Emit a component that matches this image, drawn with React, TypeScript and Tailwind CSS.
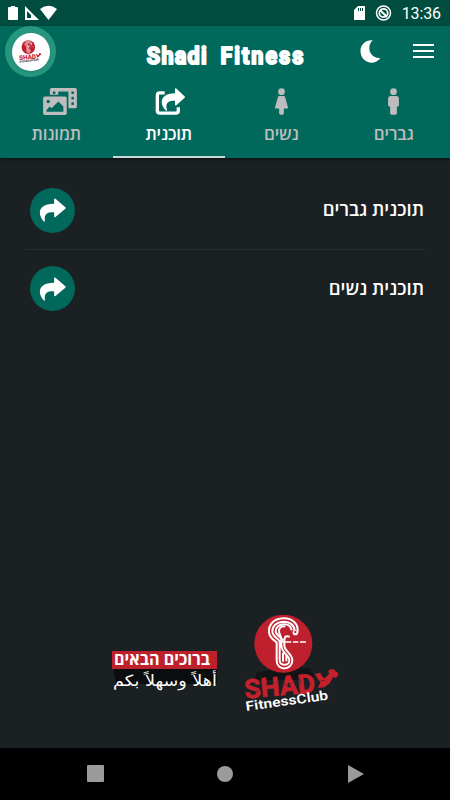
import React, { useState } from 'react';
import { FaPhotoVideo } from 'react-icons/fa';

function ShareArrow({ className }: { className?: string }) {
  return (
    <svg viewBox="0 0 82 72" className={className} fill="currentColor">
      <path d="M46 3Q46 0 50 2L80 28Q82 30 80 32L50 57Q46 59 46 55V43C24 42 15 49 18 70Q18 73 14 70C-5 49-4 17 46 17Z" />
    </svg>
  );
}

function ShareBox() {
  return (
    <svg viewBox="0 0 90 80" className="h-[27px] w-[30px]" fill="none">
      <path
        d="M29 14H14Q7 14 7 22V67Q7 75 15 75H62Q70 75 70 67V57"
        stroke="currentColor"
        strokeWidth="10"
        strokeLinecap="butt"
      />
      <path
        d="M60 2Q60-1 64 1L89 25Q91 27 89 29L64 51Q60 53 60 49V38C39 36 30 47 36 65Q37 70 32 66C12 48 15 15 60 15Z"
        fill="currentColor"
      />
    </svg>
  );
}

function ManIcon() {
  return (
    <svg viewBox="0 0 32 80" className="h-[27px] w-[11px]" fill="currentColor">
      <circle cx="16" cy="11" r="10" />
      <path d="M8 24H24Q32 24 32 32V51Q32 55 28 55H26V75Q26 79 22 79H10Q6 79 6 75V55H4Q0 55 0 51V32Q0 24 8 24Z" />
    </svg>
  );
}

function WomanIcon() {
  return (
    <svg viewBox="0 0 38 80" className="h-[27px] w-[13px]" fill="currentColor">
      <circle cx="19" cy="11" r="10" />
      <path d="M13 24H25Q29 24 30 28L38 57Q39 61 35 61H26V75Q26 79 22 79H16Q12 79 12 75V61H3Q-1 61 0 57L8 28Q9 24 13 24Z" />
    </svg>
  );
}

function ClubLogo({ className, dark = false }: { className?: string; dark?: boolean }) {
  return (
    <svg viewBox="0 0 345 345" className={className}>
      {!dark && <path d="M65 203L145 185L225 190L238 216L190 225L60 225Z" fill="#121314" />}
      <circle cx="145" cy="116" r="87" fill="#be202e" />
      <g fill="none" stroke="#fff" strokeWidth="6">
        <path d="M187 84C193 55 170 39 145 40C115 41 100 60 102 82C104 99 117 106 125 112V167C125 198 172 198 172 166C172 145 148 140 148 121C148 95 148 91 164 95" />
        <path d="M179 77C178 59 163 50 146 50C124 51 111 64 112 80C113 94 126 99 134 108V166C134 184 163 184 163 166C163 150 139 145 139 119V104C139 92 132 89 132 77C132 67 143 61 151 65" />
        <path d="M170 76C168 63 157 58 147 58C132 58 121 68 122 79C123 91 137 95 145 107" />
        <path d="M144 143V170M154 151V169" />
        <path d="M135 111H169M174 111H190M195 111H213" strokeWidth="4.500" />
      </g>
      <circle cx="181" cy="83" r="8" fill="#fff" />
      <circle cx="181" cy="81" r="3.500" fill="#be202e" />
      {/* wordmark leans upwards to the right */}
      <g
        transform="translate(30 281) rotate(-5) scale(1 1.340)"
        fill="#c6202d"
        stroke="#c6202d"
        strokeWidth="1"
        fontSize="60"
        fontWeight="800"
        fontFamily="Roboto, sans-serif"
      >
        <text x="0" y="0" textLength="213" lengthAdjust="spacingAndGlyphs">
          SHAD
        </text>
      </g>
      <path
        d="M239 207L256 203Q262 219 270 219L282 207L280 195L295 192L311 207L304 218L294 217L284 235L268 247L249 249L256 232Z"
        fill="#c6202d"
      />
      <path
        d="M40 240L62 236M44 265L72 257M94 242L117 234M149 240L169 235M194 220L198 236M213 226L230 238M257 228L271 225"
        stroke={dark ? '#fff' : '#1b2023'}
        strokeWidth="1.500"
      />
      <g transform="translate(34 318) rotate(-8) scale(1 1.100)">
        <text
          x="0"
          y="0"
          textLength="249"
          lengthAdjust="spacingAndGlyphs"
          fill={dark ? '#111' : '#fff'}
          fontSize="36"
          fontWeight="600"
          fontFamily="Roboto, sans-serif"
        >
          FitnessClub
        </text>
      </g>
    </svg>
  );
}

const tabs = [
  { id: 'photos', label: 'תמונות', icon: <FaPhotoVideo className="ml-[7px] h-[27px] w-[34px]" /> },
  { id: 'plan', label: 'תוכנית', icon: <span className="ml-[3px]"><ShareBox /></span> },
  { id: 'women', label: 'נשים', icon: <WomanIcon /> },
  { id: 'men', label: 'גברים', icon: <ManIcon /> },
];

const plans = ['תוכנית גברים', 'תוכנית נשים'];

function StatusBar() {
  return (
    <div className="flex h-[26px] items-center justify-between bg-[#004d40] text-white">
      <svg viewBox="0 0 60 26" className="h-[26px] w-[60px]" fill="currentColor">
        <path d="M9 7H11V6H15V7H17Q18 7 18 8V19Q18 20 17 20H9Q8 20 8 19V8Q8 7 9 7Z" />
        <path fillRule="evenodd" d="M25 6L39 20H25ZM27 11V18H31V15Z" />
        <path d="M40 9Q48.500 2.500 57 9L48.500 20Z" />
      </svg>
      <div className="flex items-center">
        <svg viewBox="0 0 45 26" className="h-[26px] w-[45px]" fill="none">
          <path fill="#fff" fillRule="evenodd" d="M7 6H14V20H3V10ZM7 8V11H8V8ZM9 8V11H10V8ZM11 8V11H12V8Z" />
          <circle cx="32.500" cy="13" r="7" stroke="#fff" strokeWidth="1.500" />
          <circle cx="32.500" cy="13" r="4.200" stroke="#fff" strokeWidth="1.800" />
          <path d="M29 10L36 17" stroke="#fff" strokeWidth="2" />
        </svg>
        <span className="mt-[2px] mr-[9px] ml-[6px] font-[Roboto,sans-serif] text-[16px] leading-[26px] tracking-[-0.1px]">13:36</span>
      </div>
    </div>
  );
}

export default function App() {
  const [activeTab, setActiveTab] = useState('plan');

  return (
    <div className="flex h-[800px] w-[450px] flex-col overflow-hidden bg-[#1b2023] font-['Open_Sans','Liberation_Sans',sans-serif]">
      <StatusBar />

      <header className="h-[132px] bg-[#00695c] shadow-[0_1px_3px_#0008]">
        <div className="flex h-[51px] items-start">
          <div className="ml-[5px] flex size-[51px] shrink-0 items-center justify-center rounded-full bg-[#26967f]">
            <div className="flex size-[38px] items-center justify-center rounded-full bg-white shadow-sm">
              <ClubLogo dark className="size-[27px]" />
            </div>
          </div>
          <h1 className="ml-[89px] w-[160px] pt-[14px]">
            <svg viewBox="0 0 160 32" className="h-[32px] w-[160px]">
              <g
                transform="translate(0 24) scale(0.920 1)"
                fill="#fff"
                stroke="#fff"
                strokeWidth="2"
                strokeLinejoin="round"
                fontFamily="Roboto, sans-serif"
                fontWeight="700"
                fontSize="23.500"
              >
                <text x="2" y="0" textLength="65" lengthAdjust="spacing">Shadi</text>
                <text x="82" y="0" textLength="90" lengthAdjust="spacing">Fitness</text>
              </g>
            </svg>
          </h1>
          <button className="mt-[14px] ml-[55px] text-white">
            <svg viewBox="0 0 60 68" className="h-[23px] w-[21px]" fill="currentColor">
              <path d="M37 1C17 17 26 56 59 53C46 73 16 71 5 51C-8 25 8-1 37 1Z" />
            </svg>
          </button>
          <button className="mt-[18px] ml-[32px] flex w-[21px] flex-col gap-[4px]">
            <span className="h-[2px] w-full bg-white" />
            <span className="h-[2px] w-full bg-white" />
            <span className="h-[2px] w-full bg-white" />
          </button>
        </div>

        <nav className="grid h-[81px] grid-cols-4">
          {tabs.map((tab) => (
            <button
              key={tab.id}
              onClick={() => setActiveTab(tab.id)}
              className={`flex flex-col items-center border-b-2 pt-[11px] ${
                activeTab === tab.id ? 'border-[#c5dad7] text-white' : 'border-transparent text-[#bdbdbd]'
              }`}
            >
              {tab.icon}
              <span dir="rtl" className="mt-[7px] text-[17px] leading-[24px] font-semibold tracking-[-0.2px]">
                {tab.label}
              </span>
            </button>
          ))}
        </nav>
      </header>

      <main className="flex-1 px-[25px] pt-[13px]">
        {plans.map((plan, i) => (
          <div
            key={plan}
            className={`flex items-center justify-between pr-[1px] pl-[5px] ${
              i < plans.length - 1 ? 'h-[79px] border-b border-[#292e31]' : 'h-[77px]'
            }`}
          >
            <button className="flex size-[45px] items-center justify-center rounded-full bg-[#00695c] text-white">
              <ShareArrow className="h-[24px] w-[27px]" />
            </button>
            <span dir="rtl" className="pb-[2px] text-[18.500px] leading-[28px] font-semibold text-white">
              {plan}
            </span>
          </div>
        ))}
      </main>

      <footer className="flex h-[143px] pl-[112px]">
        <svg viewBox="0 0 106 50" className="mt-[41px] h-[50px] w-[106px]">
          <path d="M0 17H105V38H4Z" fill="#0b0d0e" />
          <rect y="5" width="105" height="18" fill="#be202e" />
          <g fill="#fff" direction="rtl" fontWeight="700">
            <text x="98" y="19" textLength="96" lengthAdjust="spacingAndGlyphs" fontSize="17">
              ברוכים הבאים
            </text>
            <text x="105" y="40" textLength="104" lengthAdjust="spacingAndGlyphs" fontSize="15.500" fontFamily="DejaVu Sans, sans-serif" fontWeight="400">
              أهلاً وسهلاً بكم
            </text>
          </g>
        </svg>
        <ClubLogo className="ml-[17px] size-[115px]" />
      </footer>

      <div className="flex h-[52px] items-center bg-black">
        <svg viewBox="0 0 450 52" className="h-[52px] w-[450px]" fill="#9b9b9b">
          <rect x="87" y="17" width="17" height="17" rx="1" />
          <circle cx="225" cy="26" r="8" />
          <path d="M348 17L364 26L348 35Z" strokeLinejoin="round" />
        </svg>
      </div>
    </div>
  );
}
